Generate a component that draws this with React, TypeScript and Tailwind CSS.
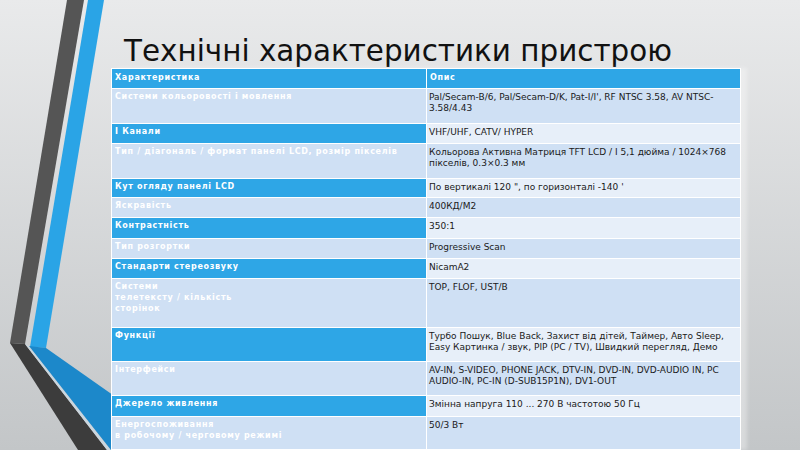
import React from "react";

type Row = { l: string[]; r: string[]; h: number };

const rows: Row[] = [
  { l: ["Системи кольоровості і мовлення"], r: ["Pal/Secam-B/6, Pal/Secam-D/K, Pat-І/І', RF NTSC 3.58, AV NTSC-", "3.58/4.43"], h: 34 },
  { l: ["І Канали"], r: ["VHF/UHF, CATV/ HYPER"], h: 19 },
  { l: ["Тип / діагональ / формат панелі LCD, розмір пікселів"], r: ["Кольорова Активна Матриця TFT LCD / І 5,1 дюйма / 1024×768", "пікселів, 0.3×0.3 мм"], h: 34 },
  { l: ["Кут огляду панелі LCD"], r: ["По вертикалі 120 \", по горизонталі -140 '"], h: 18 },
  { l: ["Яскравість"], r: ["400КД/М2"], h: 19 },
  { l: ["Контрастність"], r: ["350:1"], h: 20 },
  { l: ["Тип розгортки"], r: ["Progressive Scan"], h: 19 },
  { l: ["Стандарти стереозвуку"], r: ["NicamA2"], h: 19 },
  { l: ["Системи", "телетексту / кількість", "сторінок"], r: ["TOP, FLOF, UST/B"], h: 48 },
  { l: ["Функції"], r: ["Турбо Пошук, Blue Back, Захист від дітей, Таймер, Авто Sleep,", "Easy Картинка / звук, PIP (PC / TV), Швидкий перегляд, Демо"], h: 33 },
  { l: ["Інтерфейси"], r: ["AV-IN, S-VIDEO, PHONE JACK, DTV-IN, DVD-IN, DVD-AUDIO IN, PC", "AUDIO-IN, PC-IN (D-SUB15P1N), DV1-OUT"], h: 33 },
  { l: ["Джерело живлення"], r: ["Змінна напруга 110 ... 270 В частотою 50 Гц"], h: 20 },
  { l: ["Енергоспоживання", "в робочому / черговому режимі"], r: ["50/3 Вт"], h: 32 },
];

function Lines({ lines }: { lines: string[] }) {
  return (
    <>
      {lines.map((t, i) => (
        <div key={i} className="whitespace-nowrap">
          {t}
        </div>
      ))}
    </>
  );
}

export default function App() {
  return (
    <div className="relative w-[800px] h-[450px] overflow-hidden bg-linear-to-b from-[#e9eaeb] to-[#c3c6c8]">
      {/* decorative stripes */}
      <svg className="absolute left-0 top-0" width="130" height="450" viewBox="0 0 130 450">
        <polygon points="67,0 84,0 25,344 10,343" fill="#555555" />
        <polygon points="88,0 104,0 46,348 30,347" fill="#2aa4e6" />
        <polygon points="10,343 25,344 107,450 78,450" fill="#3c3c3c" />
        <polygon points="25,344 29,346 111,450 107,450" fill="#cbd6de" />
        <polygon points="29,346 46,348 120,400 120,450 111,450" fill="#1c88ca" />
      </svg>

      <div className="relative flex flex-col pl-[111px]">
        <h1
          className="pl-[13px] pt-[35px] text-[29.4px] leading-[33px] text-[#111111] whitespace-nowrap"
          style={{ fontFamily: '"DejaVu Sans", sans-serif' }}
        >
          Технічні характеристики пристрою
        </h1>

        <div
          className="flex w-[630px] flex-col gap-px bg-white p-px shadow-[6px_0_4px_rgba(255,255,255,0.35)]"
          style={{ fontFamily: '"DejaVu Sans", sans-serif' }}
        >
          <div className="flex h-[19px] gap-px">
            <div className="w-[314px] bg-[#2ea6e6] px-[3px] pt-[3px] text-[8px] leading-[11px] font-bold tracking-[0.7px] text-white">
              Характеристика
            </div>
            <div className="w-[313px] bg-[#2ea6e6] px-[3px] pt-[3px] text-[8px] leading-[11px] font-bold tracking-[0.7px] text-white">
              Опис
            </div>
          </div>
          {rows.map((row, i) => (
            <div key={i} className="flex gap-px" style={{ height: row.h }}>
              <div
                className={
                  "w-[314px] px-[3px] pt-[2px] text-[8px] leading-[11px] font-bold tracking-[0.7px] text-white " +
                  (i % 2 === 0 ? "bg-[#cfe0f4]" : "bg-[#2ea6e6]")
                }
              >
                <Lines lines={row.l} />
              </div>
              <div
                className={
                  "w-[313px] px-[2px] pt-[3px] text-[9px] leading-[10.5px] text-[#1a1a1a] " +
                  (i % 2 === 0 ? "bg-[#cfe0f4]" : "bg-[#e7eff9]")
                }
              >
                <Lines lines={row.r} />
              </div>
            </div>
          ))}
        </div>
      </div>
    </div>
  );
}
